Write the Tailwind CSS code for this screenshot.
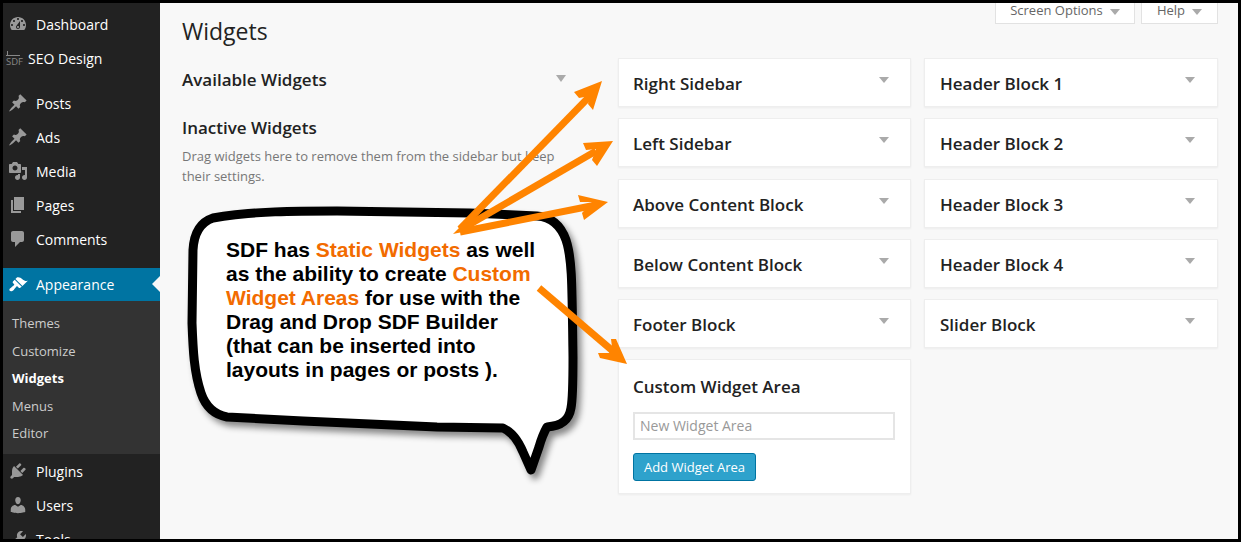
<!DOCTYPE html>
<html lang="en">
<head>
    <meta charset="UTF-8">
    <meta name="viewport" content="width=device-width, initial-scale=1.0">
    <title>Widgets</title>
    <script src="https://cdn.jsdelivr.net/npm/@tailwindcss/browser@4"></script>
</head>
<body class="bg-black">
    <div class="relative flex h-[542px] w-[1241px] overflow-hidden border-[3px] border-black bg-[#f8f8f8] font-['Open_Sans',sans-serif]">

        <!-- admin menu -->
        <aside class="w-[157px] shrink-0 bg-[#222] pt-[4px] text-[14px] text-white">
            <a class="flex h-[34px] items-center gap-[8px] pl-[5px]">
                <svg class="h-5 w-5 fill-[#999]" viewBox="0 0 20 20"><path d="M3.76 16h12.48c1.1-1.37 1.76-3.11 1.76-5 0-4.42-3.58-8-8-8s-8 3.58-8 8c0 1.89.66 3.63 1.76 5zM10 4c.55 0 1 .45 1 1s-.45 1-1 1-1-.45-1-1 .45-1 1-1zM6 6c.55 0 1 .45 1 1s-.45 1-1 1-1-.45-1-1 .45-1 1-1zm8 0c.55 0 1 .45 1 1s-.45 1-1 1-1-.45-1-1 .45-1 1-1zm-5.37 5.55L12 7v6c0 1.1-.9 2-2 2s-2-.9-2-2c0-.57.24-1.08.63-1.45zM4 10c.55 0 1 .45 1 1s-.45 1-1 1-1-.45-1-1 .45-1 1-1zm12 0c.55 0 1 .45 1 1s-.45 1-1 1-1-.45-1-1 .45-1 1-1zm-5 3c0-.55-.45-1-1-1s-1 .45-1 1 .45 1 1 1 1-.45 1-1z"/></svg>
                Dashboard
            </a>
            <a class="flex h-[34px] items-center gap-[7px] pl-[3px]">
                <span class="relative block h-5 w-[15px] shrink-0">
                    <span class="absolute left-0 top-[7px] h-px w-[14px] bg-[#888]"></span>
                    <span class="absolute left-[1px] top-[3px] h-[4px] w-px bg-[#888]"></span>
                    <span class="absolute left-0 top-[8px] text-[9.5px] leading-[12px] text-[#888]">SDF</span>
                </span>
                <span>SEO Design</span>
            </a>
            <a class="mt-[11px] flex h-[34px] items-center gap-[8px] pl-[5px]">
                <svg class="h-5 w-5 fill-[#999]" viewBox="0 0 20 20"><path d="M10.44 3.02l1.82-1.82 6.36 6.35-1.83 1.82c-1.05-.68-2.48-.57-3.41.36l-.75.75c-.92.93-1.04 2.35-.35 3.41l-1.83 1.82-2.41-2.41-2.8 2.79c-.42.42-3.38 2.71-3.8 2.29s1.86-3.39 2.28-3.81l2.79-2.79L4.1 9.36l1.83-1.82c1.05.69 2.48.57 3.4-.36l.75-.75c.93-.92 1.05-2.35.36-3.41z"/></svg>
                Posts
            </a>
            <a class="flex h-[34px] items-center gap-[8px] pl-[5px]">
                <svg class="h-5 w-5 fill-[#999]" viewBox="0 0 20 20"><path d="M10.44 3.02l1.82-1.82 6.36 6.35-1.83 1.82c-1.05-.68-2.48-.57-3.41.36l-.75.75c-.92.93-1.04 2.35-.35 3.41l-1.83 1.82-2.41-2.41-2.8 2.79c-.42.42-3.38 2.71-3.8 2.29s1.86-3.39 2.28-3.81l2.79-2.79L4.1 9.36l1.83-1.82c1.05.69 2.48.57 3.4-.36l.75-.75c.93-.92 1.05-2.35.36-3.41z"/></svg>
                Ads
            </a>
            <a class="flex h-[34px] items-center gap-[8px] pl-[5px]">
                <svg class="h-5 w-5 fill-[#999]" viewBox="0 0 20 20"><path d="M13 11V4c0-.55-.45-1-1-1h-1.67L9 1H5L3.67 3H2c-.55 0-1 .45-1 1v7c0 .55.45 1 1 1h10c.55 0 1-.45 1-1zM7 4.5c1.38 0 2.5 1.12 2.5 2.5S8.38 9.5 7 9.5 4.5 8.38 4.5 7 5.62 4.5 7 4.5zM14 6h5v10.5c0 1.38-1.12 2.5-2.5 2.5S14 17.88 14 16.5s1.12-2.5 2.5-2.5c.17 0 .34.02.5.05V9h-3V6zm-4 8.05V13h2v3.5c0 1.38-1.12 2.5-2.5 2.5S7 17.88 7 16.5 8.12 14 9.5 14c.17 0 .34.02.5.05z"/></svg>
                Media
            </a>
            <a class="flex h-[34px] items-center gap-[8px] pl-[5px]">
                <svg class="h-5 w-5 fill-[#999]" viewBox="0 0 20 20"><path d="M6 15V2h10v13H6zm-1 1h8v2H3V5h2v11z"/></svg>
                Pages
            </a>
            <a class="flex h-[34px] items-center gap-[8px] pl-[5px]">
                <svg class="h-5 w-5 fill-[#999]" viewBox="0 0 20 20"><path d="M5 2h9c1.1 0 2 .9 2 2v7c0 1.1-.9 2-2 2h-2l-5 5v-5H5c-1.1 0-2-.9-2-2V4c0-1.1.9-2 2-2z"/></svg>
                Comments
            </a>

            <a class="relative mt-[12px] flex h-[33px] items-center gap-[8px] bg-[#0074a2] pl-[5px]">
                <svg class="h-5 w-5 fill-white" viewBox="0 0 20 20"><path d="M14.48 11.06L7.41 3.99l1.5-1.5c.5-.56 2.3-.47 3.51.32 1.21.8 1.43 1.28 2.91 2.1 1.18.64 2.45 1.26 4.45.85zm-.71.71L6.7 4.7 4.93 6.47c-.39.39-.39 1.02 0 1.41l1.06 1.06c.39.39.39 1.03 0 1.42-.6.6-1.43 1.11-2.21 1.69-.35.26-.7.53-1.01.84C1.43 13.23.91 14.96 1.8 15.85c.89.89 2.62.37 3.96-.97.31-.31.58-.66.84-1.01.58-.78 1.09-1.61 1.69-2.21.39-.39 1.03-.39 1.42 0l1.06 1.06c.39.39 1.02.39 1.41 0z"/></svg>
                Appearance
                <span class="absolute right-0 top-[8px] border-y-[8px] border-r-[8px] border-y-transparent border-r-[#f8f8f8]"></span>
            </a>
            <ul class="h-[153px] bg-[#333] pt-[9px] text-[13px] text-[#ccc]">
                <li class="flex h-[27.5px] items-center pl-[9px]">Themes</li>
                <li class="flex h-[27.5px] items-center pl-[9px]">Customize</li>
                <li class="flex h-[27.5px] items-center pl-[9px] font-bold text-white">Widgets</li>
                <li class="flex h-[27.5px] items-center pl-[9px]">Menus</li>
                <li class="flex h-[27.5px] items-center pl-[9px]">Editor</li>
            </ul>

            <a class="flex h-[34px] items-center gap-[8px] pl-[5px]">
                <svg class="h-5 w-5 fill-[#999]" viewBox="0 0 20 20"><path d="M13.11 4.36L9.87 7.6 8 5.73l3.24-3.24c.35-.34 1.05-.2 1.56.32.52.51.66 1.21.31 1.55zm-8 1.77l.91-1.12 9.01 9.01-1.19.84c-.71.71-2.63 1.16-3.82 1.16H6.14L4.9 17.26c-.59.59-1.54.59-2.12 0-.59-.58-.59-1.53 0-2.12l1.24-1.24v-3.88c0-1.13.4-3.19 1.09-3.89zm7.26 3.97l3.24-3.24c.34-.35 1.04-.21 1.55.31.52.51.66 1.21.31 1.55l-3.24 3.25z"/></svg>
                Plugins
            </a>
            <a class="flex h-[34px] items-center gap-[8px] pl-[5px]">
                <svg class="h-5 w-5 fill-[#999]" viewBox="0 0 20 20"><path d="M10 9.25c-2.27 0-2.73-3.44-2.73-3.44C7 4.02 7.82 2 9.97 2c2.16 0 2.98 2.02 2.71 3.81 0 0-.41 3.44-2.68 3.44zm0 2.57L12.72 10c2.39 0 4.52 2.33 4.52 4.53v2.49s-3.65 1.13-7.24 1.13c-3.65 0-7.24-1.13-7.24-1.13v-2.49c0-2.25 1.94-4.48 4.47-4.48z"/></svg>
                Users
            </a>
            <a class="flex h-[34px] items-center gap-[8px] pl-[5px]">
                <svg class="h-5 w-5 fill-[#999]" viewBox="0 0 20 20"><path d="M16.68 9.77c-1.34 1.34-3.3 1.67-4.95.99l-5.41 6.52c-.99.99-2.59.99-3.58 0s-.99-2.59 0-3.57l6.52-5.42c-.68-1.65-.35-3.61.99-4.95 1.28-1.28 3.12-1.62 4.72-1.06l-2.89 2.89 2.82 2.82 2.86-2.87c.53 1.58.18 3.39-1.08 4.65zM3.81 16.21c.4.39 1.04.39 1.43 0 .4-.4.4-1.04 0-1.43-.39-.4-1.03-.4-1.43 0-.39.39-.39 1.03 0 1.43z"/></svg>
                Tools
            </a>
        </aside>

        <!-- page content -->
        <main class="min-w-0 flex-1 pl-[22px] pr-[20px]">
            <div class="flex h-[21px] justify-end gap-[6px] text-[13px] text-[#666]">
                <button class="flex w-[140px] items-center justify-center gap-[7px] border border-t-0 border-[#e2e2e2] bg-white pb-[4px]">Screen Options <span class="mt-[2px] border-x-[5px] border-t-[6px] border-x-transparent border-t-[#aaa]"></span></button>
                <button class="flex w-[77px] items-center justify-center gap-[7px] border border-t-0 border-[#e2e2e2] bg-white pb-[4px]">Help <span class="mt-[2px] border-x-[5px] border-t-[6px] border-x-transparent border-t-[#aaa]"></span></button>
            </div>

            <h1 class="mt-[-14px] h-[42px] text-[23px] leading-[42px] text-[#222]">Widgets</h1>

            <div class="mt-[6px] flex">
                <div class="w-[436px] shrink-0">
                    <div class="flex w-[385px] items-start justify-between pt-[10px]">
                        <h2 class="text-[17px] font-semibold leading-[24px] text-[#222]">Available Widgets</h2>
                        <span class="mr-[1px] mt-[7px] border-x-[5px] border-t-[7px] border-x-transparent border-t-[#aaa]"></span>
                    </div>
                    <h2 class="mt-[24px] text-[17px] font-semibold leading-[24px] text-[#222]">Inactive Widgets</h2>
                    <p class="mt-[6px] w-[385px] text-[13px] leading-[20px] text-[#777]">Drag widgets here to remove them from the sidebar but keep their settings.</p>
                </div>

                <div class="grid grid-cols-[293px_294px] items-start gap-x-[13px] gap-y-[11.25px]">
                    <div class="flex h-[49px] items-start justify-between border border-[#eee] bg-white pl-[14px] pr-[21px] shadow-xs"><h3 class="text-[17px] font-semibold leading-[50px] text-[#222]">Right Sidebar</h3><span class="mt-[18px] border-x-[5px] border-t-[6px] border-x-transparent border-t-[#aaa]"></span></div>
                    <div class="flex h-[49px] items-start justify-between border border-[#eee] bg-white pl-[15px] pr-[22px] shadow-xs"><h3 class="text-[17px] font-semibold leading-[50px] text-[#222]">Header Block 1</h3><span class="mt-[18px] border-x-[5px] border-t-[6px] border-x-transparent border-t-[#aaa]"></span></div>
                    <div class="flex h-[49px] items-start justify-between border border-[#eee] bg-white pl-[14px] pr-[21px] shadow-xs"><h3 class="text-[17px] font-semibold leading-[50px] text-[#222]">Left Sidebar</h3><span class="mt-[18px] border-x-[5px] border-t-[6px] border-x-transparent border-t-[#aaa]"></span></div>
                    <div class="flex h-[49px] items-start justify-between border border-[#eee] bg-white pl-[15px] pr-[22px] shadow-xs"><h3 class="text-[17px] font-semibold leading-[50px] text-[#222]">Header Block 2</h3><span class="mt-[18px] border-x-[5px] border-t-[6px] border-x-transparent border-t-[#aaa]"></span></div>
                    <div class="flex h-[49px] items-start justify-between border border-[#eee] bg-white pl-[14px] pr-[21px] shadow-xs"><h3 class="text-[17px] font-semibold leading-[50px] text-[#222]">Above Content Block</h3><span class="mt-[18px] border-x-[5px] border-t-[6px] border-x-transparent border-t-[#aaa]"></span></div>
                    <div class="flex h-[49px] items-start justify-between border border-[#eee] bg-white pl-[15px] pr-[22px] shadow-xs"><h3 class="text-[17px] font-semibold leading-[50px] text-[#222]">Header Block 3</h3><span class="mt-[18px] border-x-[5px] border-t-[6px] border-x-transparent border-t-[#aaa]"></span></div>
                    <div class="flex h-[49px] items-start justify-between border border-[#eee] bg-white pl-[14px] pr-[21px] shadow-xs"><h3 class="text-[17px] font-semibold leading-[50px] text-[#222]">Below Content Block</h3><span class="mt-[18px] border-x-[5px] border-t-[6px] border-x-transparent border-t-[#aaa]"></span></div>
                    <div class="flex h-[49px] items-start justify-between border border-[#eee] bg-white pl-[15px] pr-[22px] shadow-xs"><h3 class="text-[17px] font-semibold leading-[50px] text-[#222]">Header Block 4</h3><span class="mt-[18px] border-x-[5px] border-t-[6px] border-x-transparent border-t-[#aaa]"></span></div>
                    <div class="flex h-[49px] items-start justify-between border border-[#eee] bg-white pl-[14px] pr-[21px] shadow-xs"><h3 class="text-[17px] font-semibold leading-[50px] text-[#222]">Footer Block</h3><span class="mt-[18px] border-x-[5px] border-t-[6px] border-x-transparent border-t-[#aaa]"></span></div>
                    <div class="flex h-[49px] items-start justify-between border border-[#eee] bg-white pl-[15px] pr-[22px] shadow-xs"><h3 class="text-[17px] font-semibold leading-[50px] text-[#222]">Slider Block</h3><span class="mt-[18px] border-x-[5px] border-t-[6px] border-x-transparent border-t-[#aaa]"></span></div>
                    <div class="h-[135px] border border-[#eee] bg-white pl-[14px] pr-[15px] shadow-xs">
                        <h3 class="text-[17px] font-semibold leading-[54px] text-[#222]">Custom Widget Area</h3>
                        <input class="-mt-[2px] block h-[28px] w-[262px] border-2 border-[#e5e5e5] px-[5px] pb-px text-[14px] placeholder:text-[#999]" placeholder="New Widget Area">
                        <button class="mt-[13px] block h-[28px] w-[123px] rounded-[3px] border border-[#0074a2] bg-[#2ea2cc] text-[13px] text-white">Add Widget Area</button>
                    </div>
                </div>
            </div>
        </main>

        <!-- speech bubble over the page -->
        <svg class="pointer-events-none absolute -left-[3px] -top-[3px] h-[542px] w-[1241px] drop-shadow-[4px_5px_3px_rgba(0,0,0,0.45)]" viewBox="0 0 1241 542">
            <path fill="#fff" stroke="#000" stroke-width="9" stroke-linejoin="round" d="M213 218 C250 211 300 211 337 211 L470 213 L537 216 C552 217 561 226 566 240 C572 258 572 280 573 357 C573 385 573 398 571 408 C569 420 562 426 547 427 C543 434 541 440 539 447 L531 470 L523 452 C518 440 512 432 503 428 L437 427 L303 421 L227 417 C212 414 205 405 201 393 C194 372 193 350 192 323 L193 250 C194 232 201 222 213 218 Z"/>
        </svg>
        <div class="pointer-events-none absolute left-[223px] top-[235px] w-[330px] font-['Liberation_Sans',sans-serif] text-[21px] font-bold leading-[24px] text-black">
            <p>SDF has <span class="text-[#f26b00]">Static Widgets</span> as well</p>
            <p>as the ability to create <span class="text-[#f26b00]">Custom</span></p>
            <p><span class="text-[#f26b00]">Widget Areas</span> for use with the</p>
            <p>Drag and Drop SDF Builder</p>
            <p>(that can be inserted into</p>
            <p>layouts in pages or posts ).</p>
        </div>

        <!-- orange arrows -->
        <svg class="pointer-events-none absolute -left-[3px] -top-[3px] h-[542px] w-[1241px]" viewBox="0 0 1241 542" fill="#ff8400" stroke="none">
            <polygon points="453,234 468,219 477,229"/>
            <line x1="460" y1="229" x2="590" y2="96" stroke="#ff8400" stroke-width="7"/>
            <polygon points="602,81 574,92 579,98 590,96 588,104 593,110"/>
            <line x1="460" y1="230" x2="596" y2="151" stroke="#ff8400" stroke-width="7"/>
            <polygon points="613,141 583,143 586,150 596,149 592,160 597,166"/>
            <line x1="460" y1="232" x2="596" y2="205" stroke="#ff8400" stroke-width="7"/>
            <polygon points="608,202 578,195 580,202 592,202 582,213 584,220"/>
            <line x1="539" y1="288" x2="614" y2="352" stroke="#ff8400" stroke-width="7"/>
            <polygon points="627,364 600,358 598,353 609,353 612,347 611,339 616,339"/>
        </svg>
    </div>
</body>
</html>
